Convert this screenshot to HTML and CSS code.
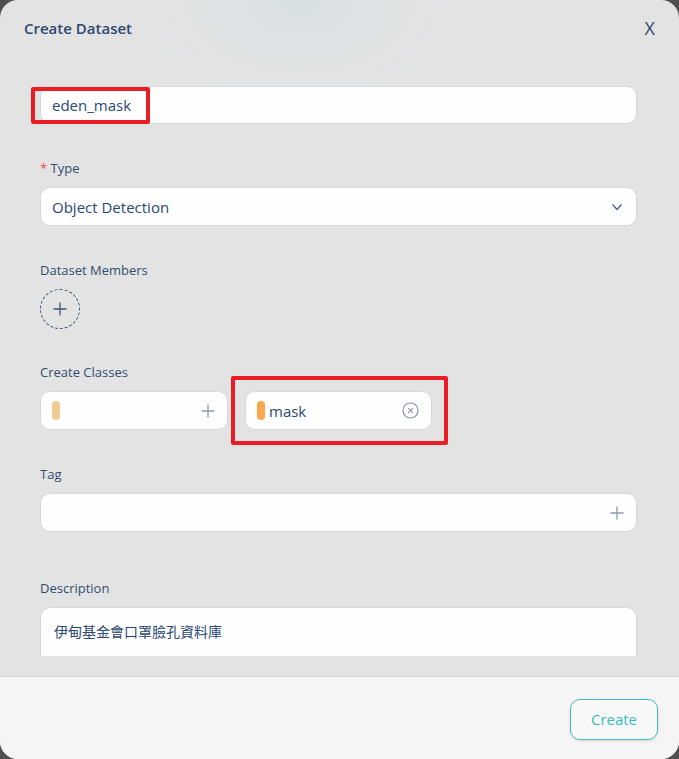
FILE: index.html
```html
<!DOCTYPE html>
<html lang="en">
<head>
<meta charset="utf-8">
<title>Create Dataset</title>
<link rel="stylesheet" href="styles.css">
</head>
<body>
<div class="modal">
  <header class="modal-header">
    <h1 class="modal-title">Create Dataset</h1>
    <span class="close">X</span>
  </header>
  <div class="modal-body">
    <div class="scroll">
      <div class="field first">
        <div class="input">eden_mask</div>
        <div class="mark mark-name"></div>
      </div>
      <div class="field">
        <label class="label"><span class="req">*</span> Type</label>
        <div class="input select">
          <span>Object Detection</span>
          <svg class="chev" width="12" height="8" viewBox="0 0 12 8"><path d="M1.5 1.5 L6 6.5 L10.5 1.5" fill="none" stroke="#4a5f7a" stroke-width="1.2"/></svg>
        </div>
      </div>
      <div class="field members">
        <label class="label">Dataset Members</label>
        <div class="add-member">
          <svg width="14" height="14" viewBox="0 0 14 14"><path d="M7 0.5 V13.5 M0.5 7 H13.5" stroke="#3f5673" stroke-width="1.3"/></svg>
        </div>
      </div>
      <div class="field">
        <label class="label">Create Classes</label>
        <div class="chips">
          <div class="chip">
            <span class="pill pill-light"></span>
            <span class="chip-text"></span>
            <svg class="chip-icon" width="14" height="14" viewBox="0 0 14 14"><path d="M7 0.5 V13.5 M0.5 7 H13.5" stroke="#8d9aa9" stroke-width="1.3"/></svg>
          </div>
          <div class="chip chip-marked">
            <span class="pill"></span>
            <span class="chip-text">mask</span>
            <svg class="chip-icon" width="17" height="17" viewBox="0 0 17 17"><circle cx="8.5" cy="8.5" r="7.5" fill="none" stroke="#8795a5" stroke-width="1.2"/><path d="M6.2 6.2 L10.8 10.8 M10.8 6.2 L6.2 10.8" stroke="#8795a5" stroke-width="1.2"/></svg>
            <div class="mark mark-chip"></div>
          </div>
        </div>
      </div>
      <div class="field">
        <label class="label">Tag</label>
        <div class="input tag">
          <svg width="14" height="14" viewBox="0 0 14 14"><path d="M7 0.5 V13.5 M0.5 7 H13.5" stroke="#8d9aa9" stroke-width="1.3"/></svg>
        </div>
      </div>
      <div class="field desc">
        <label class="label">Description</label>
        <div class="textarea">伊甸基金會口罩臉孔資料庫</div>
      </div>
    </div>
  </div>
  <footer class="modal-footer">
    <button class="btn-create">Create</button>
  </footer>
</div>
</body>
</html>
```
FILE: styles.css
```css
* { box-sizing: border-box; }
html, body {
  margin: 0;
  padding: 0;
  width: 679px;
  height: 759px;
  overflow: hidden;
  background: #4f4f4f;
  font-family: "Open Sans", "Noto Sans", "Noto Sans CJK TC", sans-serif;
  color: #2b4872;
}
.modal {
  width: 679px;
  height: 759px;
  border-radius: 18px;
  overflow: hidden;
  display: flex;
  flex-direction: column;
  background:
    radial-gradient(ellipse 170px 110px at 300px 0px, #d7dfe3 0%, rgba(220,226,229,0.6) 45%, rgba(227,227,227,0) 100%),
    #e3e3e3;
}
.modal-header {
  height: 55px;
  flex: none;
  display: flex;
  align-items: center;
  justify-content: space-between;
  padding: 0 24px 0 24px;
}
.modal-title {
  margin: 0;
  font-size: 15px;
  font-weight: 600;
  color: #2b4872;
}
.close {
  font-size: 18px;
  font-weight: 400;
  color: #2b4872;
  margin-top: 1px;
}
.modal-body {
  flex: 1;
  padding: 31px 42px 20px 40px;
  display: flex;
  flex-direction: column;
  min-height: 0;
}
.scroll {
  flex: 1;
  min-height: 0;
  clip-path: inset(-60px -60px 0 -60px);
}
.field {
  margin-bottom: 35px;
  position: relative;
}
.field.members { margin-bottom: 34px; }
.field.desc { margin-top: 47px; }
.label {
  display: block;
  font-size: 13px;
  line-height: 18px;
  margin-bottom: 10px;
  color: #324d72;
}
.req { color: #f04848; }
.input {
  height: 38px;
  background: #fefefe;
  border: 1px solid #d6d8db;
  border-radius: 10px;
  display: flex;
  align-items: center;
  padding: 0 11px;
  font-size: 15px;
  color: #2b4872;
}
.select { justify-content: space-between; height: 39px; }
.chev { margin-right: 2px; }
.add-member {
  width: 40px;
  height: 40px;
  border: 1px dashed #3d5573;
  border-radius: 50%;
  display: flex;
  align-items: center;
  justify-content: center;
}
.chips {
  display: flex;
  gap: 17px;
}
.chip {
  position: relative;
  width: 188px;
  height: 39px;
  background: #fefefe;
  border: 1px solid #d6d8db;
  border-radius: 10px;
  display: flex;
  align-items: center;
  padding: 0 12px 0 11px;
}
.chip-marked { width: 187px; }
.pill {
  width: 8px;
  height: 19px;
  border-radius: 4px;
  background: #f9a94c;
  flex: none;
}
.pill-light { background: #f1c992; }
.chip-text {
  flex: 1;
  font-size: 15px;
  margin-left: 4px;
  color: #2b4872;
}
.chip-icon { flex: none; }
.tag {
  justify-content: flex-end;
  padding-right: 12px;
  height: 39px;
}
.textarea {
  height: 80px;
  background: #fefefe;
  border: 1px solid #d6d8db;
  border-bottom: none;
  border-radius: 10px 10px 0 0;
  padding: 14px 13px;
  font-size: 14px;
  line-height: 20px;
  color: #2b4872;
}
.mark {
  position: absolute;
  border: 4px solid #ea1d27;
  border-radius: 2px;
  pointer-events: none;
}
.mark-name {
  left: -9px;
  top: 1px;
  width: 119px;
  height: 37px;
}
.mark-chip {
  left: -15px;
  top: -16px;
  width: 217px;
  height: 69px;
}
.modal-footer {
  height: 83px;
  flex: none;
  background: #f5f5f5;
  border-top: 1px solid #d3d3d3;
  display: flex;
  align-items: center;
  justify-content: flex-end;
  padding: 0 21px 0 0;
}
.btn-create {
  width: 88px;
  height: 41px;
  background: #f8f8f8;
  border: 1.5px solid #3fbfbe;
  border-radius: 10px;
  color: #3bbcbb;
  font-family: "Open Sans", "Noto Sans", sans-serif;
  font-size: 15px;
  box-shadow: 0 1px 3px rgba(0,0,0,0.12);
  margin-top: 2px;
}
```
